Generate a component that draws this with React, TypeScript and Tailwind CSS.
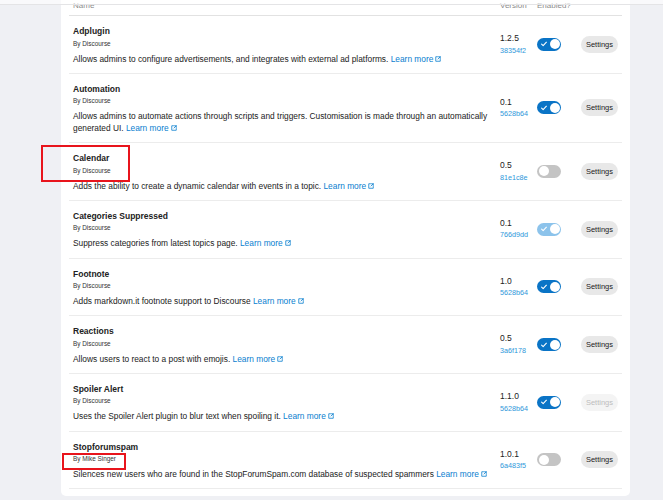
import React from "react";

type Toggle = "on" | "off" | "dimOn";
type Plugin = {
  name: string;
  author: string;
  desc: string;
  version: string;
  hash: string;
  toggle: Toggle;
  settingsDisabled?: boolean;
};

const plugins: Plugin[] = [
  {
    name: "Adplugin",
    author: "Discourse",
    desc: "Allows admins to configure advertisements, and integrates with external ad platforms.",
    version: "1.2.5",
    hash: "38354f2",
    toggle: "on",
  },
  {
    name: "Automation",
    author: "Discourse",
    desc: "Allows admins to automate actions through scripts and triggers. Customisation is made through an automatically generated UI.",
    version: "0.1",
    hash: "5628b64",
    toggle: "on",
  },
  {
    name: "Calendar",
    author: "Discourse",
    desc: "Adds the ability to create a dynamic calendar with events in a topic.",
    version: "0.5",
    hash: "81e1c8e",
    toggle: "off",
  },
  {
    name: "Categories Suppressed",
    author: "Discourse",
    desc: "Suppress categories from latest topics page.",
    version: "0.1",
    hash: "766d9dd",
    toggle: "dimOn",
  },
  {
    name: "Footnote",
    author: "Discourse",
    desc: "Adds markdown.it footnote support to Discourse",
    version: "1.0",
    hash: "5628b64",
    toggle: "on",
  },
  {
    name: "Reactions",
    author: "Discourse",
    desc: "Allows users to react to a post with emojis.",
    version: "0.5",
    hash: "3a6f178",
    toggle: "on",
  },
  {
    name: "Spoiler Alert",
    author: "Discourse",
    desc: "Uses the Spoiler Alert plugin to blur text when spoiling it.",
    version: "1.1.0",
    hash: "5628b64",
    toggle: "on",
    settingsDisabled: true,
  },
  {
    name: "Stopforumspam",
    author: "Mike Singer",
    desc: "Silences new users who are found in the StopForumSpam.com database of suspected spammers",
    version: "1.0.1",
    hash: "6a483f5",
    toggle: "off",
  },
];

function ExtIcon() {
  return (
    <svg
      viewBox="0 0 12 12"
      className="inline-block w-[6px] h-[6px] ml-[2px] align-[0px]"
      fill="none"
      stroke="currentColor"
      strokeWidth="1.6"
      strokeLinecap="round"
      strokeLinejoin="round"
    >
      <path d="M5 1.5H1.5v9h9V7" />
      <path d="M6 6l4.5-4.5" />
      <path d="M7 1.5h3.5V5" />
    </svg>
  );
}

function Switch({ state }: { state: Toggle }) {
  if (state === "off") {
    return (
      <div className="relative w-[24px] h-[13px] rounded-full bg-[#c4c4c4]">
        <div className="absolute left-[1.5px] top-[1.5px] w-[10px] h-[10px] rounded-full bg-white" />
      </div>
    );
  }
  const track = state === "on" ? "bg-[#0a74c6]" : "bg-[#8cc3eb]";
  return (
    <div className={`relative w-[24px] h-[13px] rounded-full ${track}`}>
      <svg
        viewBox="0 0 10 10"
        className="absolute left-[4px] top-[3.5px] w-[6px] h-[6px]"
        fill="none"
        stroke="white"
        strokeWidth="1.8"
        strokeLinecap="round"
        strokeLinejoin="round"
      >
        <path d="M1 5.2l2.6 2.6L9 2" />
      </svg>
      <div className="absolute right-[1.5px] top-[1.5px] w-[10px] h-[10px] rounded-full bg-white" />
    </div>
  );
}

export default function App() {
  return (
    <div className="relative h-[500px] overflow-hidden bg-[#eff0f4] font-['Liberation_Sans',Arial,sans-serif] text-[#222]">
      <div className="absolute top-0 left-0 right-0 h-[5px] bg-white/60 border-b border-[#e4e4e6] z-10" />

      <div className="ml-[61px] w-[569px] -mt-[12px] bg-white rounded-b-[5px] px-[8px] pb-[7px]">
        <div className="grid grid-cols-[427px_37px_44px_45px] h-[28px] items-end border-b border-[#e2e2e2] pb-[4px] text-[8px] leading-[10px] text-[#8a8a8a]">
          <div className="pl-[4px]">Name</div>
          <div className="pl-[4px]">Version</div>
          <div className="pl-[4px] whitespace-nowrap">Enabled?</div>
          <div />
        </div>

        {plugins.map((p) => (
          <div
            key={p.name}
            className="grid grid-cols-[427px_37px_44px_45px] items-center border-b border-[#ececec]"
          >
            <div className="pl-[4px] pr-[2px] pt-[9px] pb-[7.5px]">
              <div className="text-[8.5px] leading-[12px] font-bold text-[#222]">{p.name}</div>
              <div className="mt-[1.5px] text-[6.4px] leading-[9px] text-[#333]">By {p.author}</div>
              <div className="mt-[6px] text-[8.35px] leading-[11.7px] text-[#222]">
                {p.desc}{" "}
                <span className="text-[#0a80cf] whitespace-nowrap">
                  Learn more
                  <ExtIcon />
                </span>
              </div>
            </div>
            <div className="pl-[4px]">
              <div className="text-[8.5px] leading-[12.5px] text-[#222]">{p.version}</div>
              <div className="text-[7.2px] leading-[12px] text-[#2d97da]">{p.hash}</div>
            </div>
            <div className="pl-[4px]">
              <Switch state={p.toggle} />
            </div>
            <div className="pl-[4px]">
              <div
                className={`w-[37px] h-[17px] rounded-full flex items-center justify-center text-[7.5px] ${
                  p.settingsDisabled ? "bg-[#f4f4f4] text-[#bdbdbd]" : "bg-[#e8e8e8] text-[#222]"
                }`}
              >
                Settings
              </div>
            </div>
          </div>
        ))}
      </div>

      <div className="absolute left-[41px] top-[145px] w-[89px] h-[37px] border-2 border-[#e8141c]" />
      <div className="absolute left-[62px] top-[453px] w-[64px] h-[17px] border-2 border-[#e8141c]" />
    </div>
  );
}
